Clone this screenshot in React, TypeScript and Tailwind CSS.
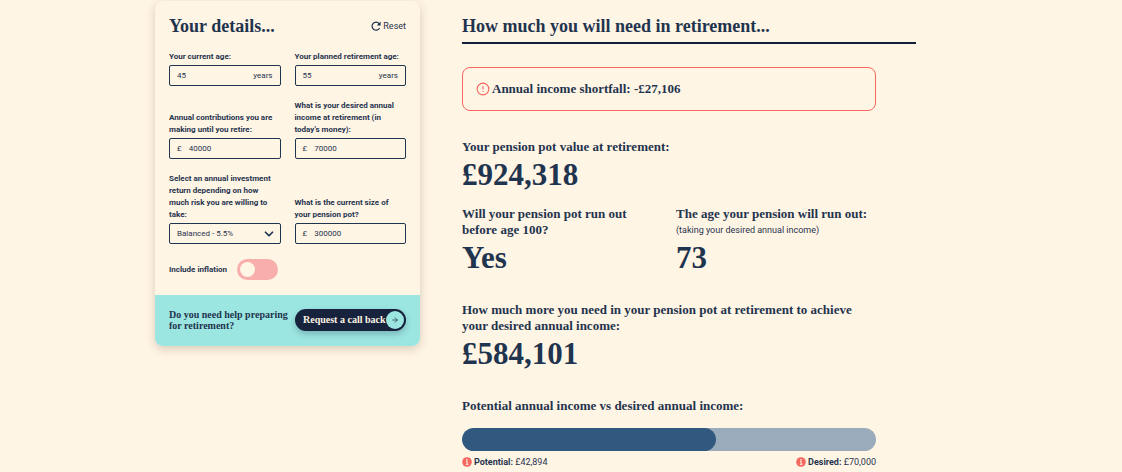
import { useState, type ReactNode } from 'react';
import { ArrowRight, ChevronDown, CircleAlert } from 'lucide-react';

const DEFAULTS = {
  age: '45',
  retirementAge: '55',
  contributions: '40000',
  desiredIncome: '70000',
  risk: 'balanced',
  pot: '300000',
  inflation: false,
};

type Details = typeof DEFAULTS;

const POTENTIAL_INCOME = 42894;
const DESIRED_INCOME = 70000;

const formatMoney = (value: number) => `£${value.toLocaleString('en-GB')}`;

export default function App() {
  const [details, setDetails] = useState<Details>(DEFAULTS);

  const update = (patch: Partial<Details>) => setDetails((current) => ({ ...current, ...patch }));

  return (
    <div className="min-h-screen bg-[#fff5e5] font-['Roboto',sans-serif] text-[#1f344e]">
      <main className="mx-auto grid max-w-[812px] grid-cols-[265px_1fr] items-start gap-[42px] pt-px">
        <DetailsCard details={details} onChange={update} onReset={() => setDetails(DEFAULTS)} />
        <Results />
      </main>
    </div>
  );
}

function DetailsCard({
  details,
  onChange,
  onReset,
}: {
  details: Details;
  onChange: (patch: Partial<Details>) => void;
  onReset: () => void;
}) {
  return (
    <form
      className="overflow-hidden rounded-lg shadow-[0_3px_10px_rgba(60,40,20,0.2)]"
      onSubmit={(event) => event.preventDefault()}
    >
      <div className="px-[14px] pt-3 pb-[15px]">
        <div className="mb-[13px] flex h-[25px] items-center justify-between">
          <h2 className="font-['Liberation_Serif',serif] text-[18px] leading-6 font-bold">Your details...</h2>
          <button type="button" onClick={onReset} className="flex items-center gap-[2px] text-[9px] leading-3">
            <ResetIcon />
            Reset
          </button>
        </div>

        <div className="grid grid-cols-2 items-end gap-[14px]">
          <Field id="age" label="Your current age:">
            <TextBox id="age" value={details.age} suffix="years" onChange={(age) => onChange({ age })} />
          </Field>
          <Field id="retirement-age" label="Your planned retirement age:">
            <TextBox
              id="retirement-age"
              value={details.retirementAge}
              suffix="years"
              onChange={(retirementAge) => onChange({ retirementAge })}
            />
          </Field>
          <Field id="contributions" label="Annual contributions you are making until you retire:">
            <TextBox
              id="contributions"
              value={details.contributions}
              prefix="£"
              onChange={(contributions) => onChange({ contributions })}
            />
          </Field>
          <Field id="desired-income" label="What is your desired annual income at retirement (in today's money):">
            <TextBox
              id="desired-income"
              value={details.desiredIncome}
              prefix="£"
              onChange={(desiredIncome) => onChange({ desiredIncome })}
            />
          </Field>
          <Field id="risk" label="Select an annual investment return depending on how much risk you are willing to take:">
            <div className="relative">
              <select
                id="risk"
                value={details.risk}
                onChange={(event) => onChange({ risk: event.target.value })}
                className="block h-[21px] w-full appearance-none rounded-[2px] border border-[#1f344e] bg-transparent px-[7px] text-[8px]"
              >
                <option value="cautious">Cautious - 3.5%</option>
                <option value="balanced">Balanced - 5.5%</option>
                <option value="adventurous">Adventurous - 7.5%</option>
              </select>
              <ChevronDown className="pointer-events-none absolute top-1 right-[5px] size-[14px]" strokeWidth={3} />
            </div>
          </Field>
          <Field id="pot" label="What is the current size of your pension pot?">
            <TextBox id="pot" value={details.pot} prefix="£" onChange={(pot) => onChange({ pot })} />
          </Field>
        </div>

        <div className="mt-[15px] flex items-center gap-[10px]">
          <label htmlFor="inflation" className="text-[8px] leading-3 font-bold">
            Include inflation
          </label>
          <input
            id="inflation"
            type="checkbox"
            checked={details.inflation}
            onChange={(event) => onChange({ inflation: event.target.checked })}
            className="flex h-[21px] w-[41px] appearance-none items-center rounded-full bg-[#f8aeaa] px-[3px] before:size-[15px] before:rounded-full before:bg-[#fff5e5] checked:justify-end checked:bg-[#9ce6e2]"
          />
        </div>
      </div>

      <div className="flex h-[51px] items-center justify-between bg-[#9ce6e2] px-[14px] pb-[2px]">
        <p className="font-['Liberation_Serif',serif] text-[10px] leading-[11px] font-bold">
          Do you need help preparing
          <br />
          for retirement?
        </p>
        <button
          type="button"
          className="flex h-[22px] w-[111px] items-center justify-between rounded-full bg-[#17233c] pr-[2px] pl-2 font-['Liberation_Serif',serif] text-[10px] font-bold whitespace-nowrap text-[#fff5e5] shadow-[0_3px_6px_rgba(23,35,60,0.25)]"
        >
          Request a call back
          <span className="flex size-[18px] shrink-0 items-center justify-center rounded-full bg-[#9ce6e2] text-[#17233c]">
            <ArrowRight className="size-2" strokeWidth={2} />
          </span>
        </button>
      </div>
    </form>
  );
}

function Field({ id, label, children }: { id: string; label: string; children: ReactNode }) {
  return (
    <div className="flex flex-col gap-[2px]">
      <label htmlFor={id} className="pr-1 text-[8px] leading-3 font-bold">
        {label}
      </label>
      {children}
    </div>
  );
}

function TextBox({
  id,
  value,
  prefix,
  suffix,
  onChange,
}: {
  id: string;
  value: string;
  prefix?: string;
  suffix?: string;
  onChange: (value: string) => void;
}) {
  return (
    <div className="flex h-[21px] items-center gap-[7px] rounded-[2px] border border-[#1f344e] px-[7px] text-[8px]">
      {prefix && <span>{prefix}</span>}
      <input
        id={id}
        type="text"
        inputMode="numeric"
        value={value}
        onChange={(event) => onChange(event.target.value)}
        className="w-full min-w-0 bg-transparent outline-none"
      />
      {suffix && <span>{suffix}</span>}
    </div>
  );
}

function Results() {
  return (
    <section className="font-['Liberation_Serif',serif] font-bold">
      <h2 className="mr-[51px] border-b-2 border-[#111f38] pt-[13px] pb-[3px] text-[18px] leading-[25px]">
        How much you will need in retirement...
      </h2>

      <div className="mr-[91px]">
        <div className="mt-[23px] flex h-11 items-center gap-[2px] rounded-lg border border-[#f5665f] px-[13px] text-[13px]">
          <CircleAlert className="size-[14px] text-[#f5665f]" strokeWidth={2} />
          <p>Annual income shortfall: -£27,106</p>
        </div>

        <Result title="Your pension pot value at retirement:" value="£924,318" />

        <div className="-mt-[13px] grid grid-cols-[1fr_200px] gap-[14px]">
          <Result title="Will your pension pot run out before age 100?" value="Yes" />
          <Result title="The age your pension will run out:" note="(taking your desired annual income)" value="73" />
        </div>

        <Result
          title="How much more you need in your pension pot at retirement to achieve your desired annual income:"
          value="£584,101"
        />

        <h3 className="mt-7 text-[13px] leading-4">Potential annual income vs desired annual income:</h3>
        <div className="mt-[14px] h-[23px] overflow-hidden rounded-full bg-[#9aacbc]">
          <div
            className="h-full rounded-full bg-[#31597f]"
            style={{ width: `${(POTENTIAL_INCOME / DESIRED_INCOME) * 100}%` }}
          />
        </div>
        <div className="mt-[5px] flex justify-between font-['Roboto',sans-serif] text-[9px] leading-3 font-normal">
          <Legend label="Potential:" amount={POTENTIAL_INCOME} />
          <Legend label="Desired:" amount={DESIRED_INCOME} />
        </div>
      </div>
    </section>
  );
}

function Result({ title, note, value }: { title: string; note?: string; value: string }) {
  return (
    <div className="mt-7">
      <h3 className="text-[13px] leading-4">{title}</h3>
      {note && <p className="font-['Roboto',sans-serif] text-[9px] leading-4 font-normal">{note}</p>}
      <p className="mt-1 text-[31px] leading-8">{value}</p>
    </div>
  );
}

function Legend({ label, amount }: { label: string; amount: number }) {
  return (
    <span className="flex items-center gap-[2px]">
      <InfoIcon />
      <span>
        <b>{label}</b> {formatMoney(amount)}
      </span>
    </span>
  );
}

function ResetIcon() {
  return (
    <svg viewBox="0 0 10 10" className="size-[10px]" fill="none" stroke="currentColor" strokeWidth="1.2">
      <path d="M8.6 7A4 4 0 1 1 8.1 2.6" />
      <path d="M9.6 0.6V4.4H5.8Z" fill="currentColor" stroke="none" />
    </svg>
  );
}

function InfoIcon() {
  return (
    <svg viewBox="0 0 10 10" className="size-[10px]">
      <circle cx="5" cy="5" r="4.8" fill="#f5665f" />
      <circle cx="5" cy="2.9" r="0.8" fill="#fff5e5" />
      <path d="M4 4.6H5.2V7.2M3.8 7.3H6.4" stroke="#fff5e5" strokeWidth="1" fill="none" />
    </svg>
  );
}
